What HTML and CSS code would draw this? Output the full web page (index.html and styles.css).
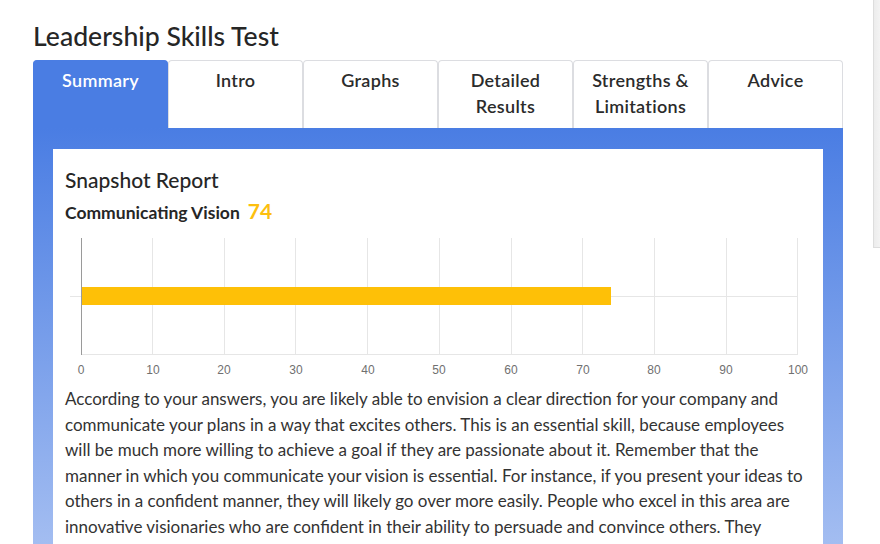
FILE: index.html
```html
<!DOCTYPE html>
<html lang="en">
<head>
<meta charset="utf-8">
<title>Leadership Skills Test</title>
<link rel="stylesheet" href="styles.css">
</head>
<body>
<div class="page">
  <main class="main">
    <h1 class="title">Leadership Skills Test</h1>
    <nav class="tabs">
      <div class="tab active">Summary</div>
      <div class="tab">Intro</div>
      <div class="tab">Graphs</div>
      <div class="tab">Detailed<br>Results</div>
      <div class="tab">Strengths &amp;<br>Limitations</div>
      <div class="tab">Advice</div>
    </nav>
    <section class="panel">
      <div class="card">
        <h2 class="card-title">Snapshot Report</h2>
        <div class="metric"><span class="metric-name">Communicating Vision</span><span class="metric-score">74</span></div>
        <svg class="chart" width="746" height="150" viewBox="0 0 746 150">
          <g stroke="#e6e6e6" stroke-width="1">
            <line x1="87.5" y1="10" x2="87.5" y2="126"/>
            <line x1="159.5" y1="10" x2="159.5" y2="126"/>
            <line x1="230.5" y1="10" x2="230.5" y2="126"/>
            <line x1="302.5" y1="10" x2="302.5" y2="126"/>
            <line x1="374.5" y1="10" x2="374.5" y2="126"/>
            <line x1="446.5" y1="10" x2="446.5" y2="126"/>
            <line x1="517.5" y1="10" x2="517.5" y2="126"/>
            <line x1="589.5" y1="10" x2="589.5" y2="126"/>
            <line x1="661.5" y1="10" x2="661.5" y2="126"/>
            <line x1="732.5" y1="10" x2="732.5" y2="126"/>
            <line x1="5" y1="68.5" x2="733" y2="68.5"/>
            <line x1="16" y1="126.5" x2="733" y2="126.5"/>
          </g>
          <rect x="16" y="59" width="530" height="18" fill="#fec007"/>
          <line x1="16.5" y1="10" x2="16.5" y2="127" stroke="#9a9a9a" stroke-width="1"/>
          <g class="ticks" fill="#707070" font-size="12" text-anchor="middle">
            <text x="16" y="146">0</text>
            <text x="88" y="146">10</text>
            <text x="159" y="146">20</text>
            <text x="231" y="146">30</text>
            <text x="303" y="146">40</text>
            <text x="374" y="146">50</text>
            <text x="446" y="146">60</text>
            <text x="518" y="146">70</text>
            <text x="589" y="146">80</text>
            <text x="661" y="146">90</text>
            <text x="733" y="146">100</text>
          </g>
        </svg>
        <p class="text">According to your answers, you are likely able to envision a clear direction for your company and communicate your plans in a way that excites others. This is an essential skill, because employees will be much more willing to achieve a goal if they are passionate about it. Remember that the manner in which you communicate your vision is essential. For instance, if you present your ideas to others in a confident manner, they will likely go over more easily. People who excel in this area are innovative visionaries who are confident in their ability to persuade and convince others. They</p>
      </div>
    </section>
  </main>
  <aside class="side"></aside>
</div>
</body>
</html>
```
FILE: styles.css
```css
html, body {
  margin: 0;
  padding: 0;
  height: 100%;
  overflow: hidden;
  background: #fff;
}
body {
  font-family: Lato, "Open Sans", sans-serif;
  color: #2b2b2b;
}
.page {
  display: flex;
  align-items: flex-start;
  width: 880px;
  height: 544px;
  overflow: hidden;
}
.main {
  flex: 0 0 810px;
  margin-left: 33px;
}
.title {
  margin: 0;
  padding-top: 20px;
  height: 60px;
  box-sizing: border-box;
  font-size: 26.6px;
  line-height: 32px;
  font-weight: 500;
  color: #262626;
}
.tabs {
  display: grid;
  grid-template-columns: repeat(6, 1fr);
  height: 68px;
}
.tab {
  border: 1px solid #dcdde1;
  border-bottom: none;
  border-radius: 4px 4px 0 0;
  background: #fff;
  text-align: center;
  font-size: 18px;
  font-weight: 600;
  line-height: 26px;
  padding-top: 6px;
  color: #2b2b2b;
  letter-spacing: 0.3px;
}
.tab.active {
  background: #4a7de3;
  border-color: #4a7de3;
  color: #fff;
}
.panel {
  background: linear-gradient(180deg, #4a7de3 0, #a3bdf1 416px, #c0d3f6 700px);
  padding: 21px 20px 20px;
}
.card {
  background: #fff;
  padding: 19px 12px 20px;
}
.card-title {
  margin: 0;
  font-size: 21px;
  line-height: 24px;
  font-weight: 500;
  color: #262626;
}
.metric {
  margin-top: 7px;
  display: flex;
  align-items: baseline;
  gap: 8px;
  line-height: 24px;
}
.metric-name {
  font-size: 17.5px;
  font-weight: 700;
  color: #262626;
}
.metric-score {
  font-size: 21px;
  font-weight: 700;
  color: #fdbf0f;
}
.chart {
  display: block;
  margin-top: 3px;
}
.ticks {
  font-family: "Liberation Sans", Arial, sans-serif;
}
.text {
  margin: 8px 0 0;
  font-size: 17px;
  line-height: 25.6px;
  color: #333;
}
.side {
  flex: 0 0 60px;
  margin-left: 30px;
  height: 248px;
  box-sizing: border-box;
  border: 1px solid #dddddd;
  border-top: none;
  background: linear-gradient(90deg, #ececec, #fafafa 12px, #fff);
}
```
